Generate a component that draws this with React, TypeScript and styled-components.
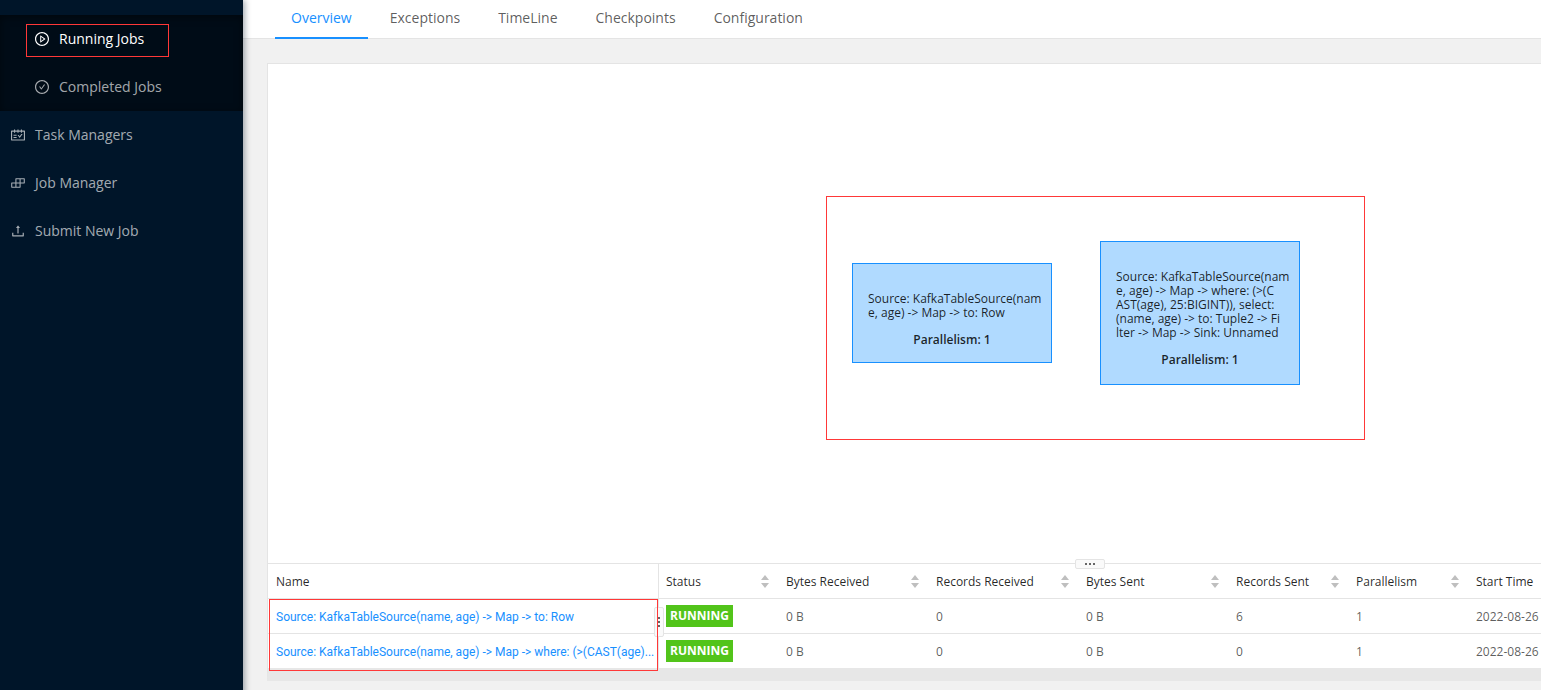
import React from "react";
import styled, { createGlobalStyle, css } from "styled-components";
import {
  AiOutlineBuild,
  AiOutlineCheckCircle,
  AiOutlinePlayCircle,
  AiOutlineSchedule,
  AiOutlineUpload,
} from "react-icons/ai";

const GlobalStyle = createGlobalStyle`
  *, *::before, *::after { box-sizing: border-box; }
  body {
    margin: 0;
    background: #f1f1f1;
    color: rgba(0, 0, 0, 0.65);
    font-family: "Open Sans", "Noto Sans", sans-serif;
    font-size: 14px;
  }
`;

const Layout = styled.div`
  display: flex;
  min-height: 100vh;
  overflow: hidden;
`;

const Sidebar = styled.nav`
  flex: none;
  width: 243px;
  padding-top: 15px;
  background: #001529;
  box-shadow: 2px 0 6px rgba(0, 21, 41, 0.35);
  z-index: 1;
`;

const Menu = styled.ul<{ $nested?: boolean }>`
  margin: 0;
  padding: 0;
  list-style: none;
  ${(p) =>
    p.$nested &&
    css`
      background: #000c17;
      box-shadow: inset 0 2px 8px rgba(0, 0, 0, 0.45);
    `}
`;

const MenuLink = styled.a<{ $nested?: boolean; $active?: boolean }>`
  position: relative;
  display: flex;
  align-items: center;
  gap: 9px;
  height: 48px;
  padding-left: ${(p) => (p.$nested ? 34 : 10)}px;
  color: ${(p) => (p.$active ? "#fff" : "rgba(255, 255, 255, 0.65)")};
  line-height: 18px;
  text-decoration: none;
  svg {
    width: 16px;
    height: 16px;
  }
`;

const Marker = styled.span`
  position: absolute;
  border: 1px solid #ff3838;
  pointer-events: none;
`;

const MenuMarker = styled(Marker)`
  left: 26px;
  top: 9px;
  width: 143px;
  height: 33px;
`;

const Main = styled.main`
  flex: 1;
  min-width: 0;
`;

const Tabs = styled.div`
  display: flex;
  gap: 6px;
  height: 39px;
  padding-left: 32px;
  background: #fff;
  border-bottom: 1px solid #e4e4e4;
`;

const Tab = styled.button<{ $active?: boolean }>`
  height: 39px;
  padding: 0 16px 2px;
  border: 0;
  border-bottom: 2px solid ${(p) => (p.$active ? "#1890ff" : "transparent")};
  background: none;
  color: ${(p) => (p.$active ? "#1890ff" : "inherit")};
  font: inherit;
`;

const Card = styled.section`
  width: max(100% - 48px, 1646px);
  margin: 24px;
  border: 1px solid #e4e4e4;
  border-bottom: 12px solid #e7e7e7;
  background: #fff;
`;

const Graph = styled.div`
  position: relative;
  height: 500px;
  border-bottom: 1px solid #e4e4e4;
`;

const GraphMarker = styled(Marker)`
  left: 558px;
  top: 132px;
  width: 539px;
  height: 244px;
`;

const Node = styled.div<{ $x: number; $y: number; $height: number }>`
  position: absolute;
  left: ${(p) => p.$x}px;
  top: ${(p) => p.$y}px;
  width: 200px;
  height: ${(p) => p.$height}px;
  padding: 28px 15px 0;
  border: 1px solid #1890ff;
  background: #b0daff;
  color: rgba(0, 0, 0, 0.85);
  font-size: 12px;
  line-height: 14px;
  white-space: pre;
`;

const NodeFooter = styled.strong`
  display: block;
  margin-top: 13px;
  text-align: center;
  font-weight: 600;
`;

const Handle = styled.button<{ $vertical?: boolean }>`
  position: absolute;
  display: flex;
  flex-direction: ${(p) => (p.$vertical ? "column" : "row")};
  align-items: center;
  justify-content: center;
  gap: 2px;
  width: ${(p) => (p.$vertical ? 10 : 30)}px;
  height: ${(p) => (p.$vertical ? 30 : 10)}px;
  padding: 0;
  border: 1px solid #e4e4e4;
  border-radius: 2px;
  background: #fafafa;
`;

const GraphHandle = styled(Handle)`
  left: calc(50% - 15px);
  bottom: -6px;
`;

const TableHandle = styled(Handle)`
  left: 386px;
  top: 43px;
`;

const Dot = styled.i`
  width: 2px;
  height: 2px;
  background: #666;
`;

const TableArea = styled.div`
  position: relative;
`;

const TableMarker = styled(Marker)`
  left: 1px;
  top: 35px;
  width: 389px;
  height: 72px;
`;

const Table = styled.table`
  width: 100%;
  table-layout: fixed;
  border-collapse: separate;
  border-spacing: 0;
  font-size: 12px;
`;

const cell = css`
  height: 35px;
  padding: 0 8px;
  border-bottom: 1px solid #e4e4e4;
  text-align: left;
  font-weight: 400;
  white-space: nowrap;
  &:nth-child(2) {
    padding-left: 7px;
    border-left: 1px solid #e4e4e4;
  }
`;

const Th = styled.th`
  ${cell}
  color: rgba(0, 0, 0, 0.85);
`;

const Td = styled.td`
  ${cell}
`;

const Row = styled.tr`
  &:last-child ${Td} {
    border-bottom-color: #e7e7e7;
  }
`;

const SortButton = styled.button`
  display: flex;
  align-items: center;
  justify-content: space-between;
  width: 100%;
  padding: 0;
  border: 0;
  background: none;
  color: inherit;
  font: inherit;
`;

const NameLink = styled.a`
  color: #1890ff;
  font-family: Roboto, "Open Sans", sans-serif;
  text-decoration: none;
`;

const Tag = styled.span`
  display: block;
  width: 67px;
  background: #52c41a;
  color: #fff;
  font-weight: 700;
  line-height: 22px;
  text-align: center;
`;

const Sorter = () => (
  <svg width="10" height="14" viewBox="0 0 10 14" fill="#bfbfbf" aria-hidden="true">
    <path d="M5 1 9 6H1zM5 14 1 9h8z" />
  </svg>
);

const Dots = () => (
  <>
    <Dot />
    <Dot />
    <Dot />
  </>
);

const tabs = ["Overview", "Exceptions", "TimeLine", "Checkpoints", "Configuration"];

const columns = [
  { title: "Name", width: 390 },
  { title: "Status", width: 120, sortable: true },
  { title: "Bytes Received", width: 150, sortable: true },
  { title: "Records Received", width: 150, sortable: true },
  { title: "Bytes Sent", width: 150, sortable: true },
  { title: "Records Sent", width: 120, sortable: true },
  { title: "Parallelism", width: 120, sortable: true },
  { title: "Start Time" },
];

const rows = [
  {
    name: "Source: KafkaTableSource(name, age) -> Map -> to: Row",
    values: ["0 B", "0", "0 B", "6", "1", "2022-08-26"],
  },
  {
    name: "Source: KafkaTableSource(name, age) -> Map -> where: (>(CAST(age)...",
    values: ["0 B", "0", "0 B", "0", "1", "2022-08-26"],
  },
];

const nodes = [
  {
    x: 584,
    y: 199,
    height: 100,
    text: "Source: KafkaTableSource(nam\ne, age) -> Map -> to: Row",
  },
  {
    x: 832,
    y: 177,
    height: 144,
    text: "Source: KafkaTableSource(nam\ne, age) -> Map -> where: (>(C\nAST(age), 25:BIGINT)), select:\n(name, age) -> to: Tuple2 -> Fi\nlter -> Map -> Sink: Unnamed",
  },
];

export default function App() {
  return (
    <Layout>
      <GlobalStyle />
      <Sidebar>
        <Menu $nested>
          <li>
            <MenuLink href="#running" $nested $active>
              <AiOutlinePlayCircle />
              Running Jobs
              <MenuMarker />
            </MenuLink>
          </li>
          <li>
            <MenuLink href="#completed" $nested>
              <AiOutlineCheckCircle />
              Completed Jobs
            </MenuLink>
          </li>
        </Menu>
        <Menu>
          <li>
            <MenuLink href="#task-managers">
              <AiOutlineSchedule />
              Task Managers
            </MenuLink>
          </li>
          <li>
            <MenuLink href="#job-manager">
              <AiOutlineBuild />
              Job Manager
            </MenuLink>
          </li>
          <li>
            <MenuLink href="#submit">
              <AiOutlineUpload />
              Submit New Job
            </MenuLink>
          </li>
        </Menu>
      </Sidebar>
      <Main>
        <Tabs role="tablist">
          {tabs.map((label, i) => (
            <Tab key={label} role="tab" aria-selected={i === 0} $active={i === 0}>
              {label}
            </Tab>
          ))}
        </Tabs>
        <Card>
          <Graph>
            {nodes.map((n) => (
              <Node key={n.x} $x={n.x} $y={n.y} $height={n.height}>
                {n.text}
                <NodeFooter>Parallelism: 1</NodeFooter>
              </Node>
            ))}
            <GraphMarker />
            <GraphHandle aria-label="Resize graph">
              <Dots />
            </GraphHandle>
          </Graph>
          <TableArea>
            <Table>
              <colgroup>
                {columns.map((c) => (
                  <col key={c.title} width={c.width} />
                ))}
              </colgroup>
              <thead>
                <tr>
                  {columns.map((c) => (
                    <Th key={c.title}>
                      {c.sortable ? (
                        <SortButton>
                          {c.title}
                          <Sorter />
                        </SortButton>
                      ) : (
                        c.title
                      )}
                    </Th>
                  ))}
                </tr>
              </thead>
              <tbody>
                {rows.map((r) => (
                  <Row key={r.name}>
                    <Td>
                      <NameLink href="#vertex">{r.name}</NameLink>
                    </Td>
                    <Td>
                      <Tag>RUNNING</Tag>
                    </Td>
                    {r.values.map((v, i) => (
                      <Td key={i}>{v}</Td>
                    ))}
                  </Row>
                ))}
              </tbody>
            </Table>
            <TableHandle $vertical aria-label="Resize table">
              <Dots />
            </TableHandle>
            <TableMarker />
          </TableArea>
        </Card>
      </Main>
    </Layout>
  );
}
